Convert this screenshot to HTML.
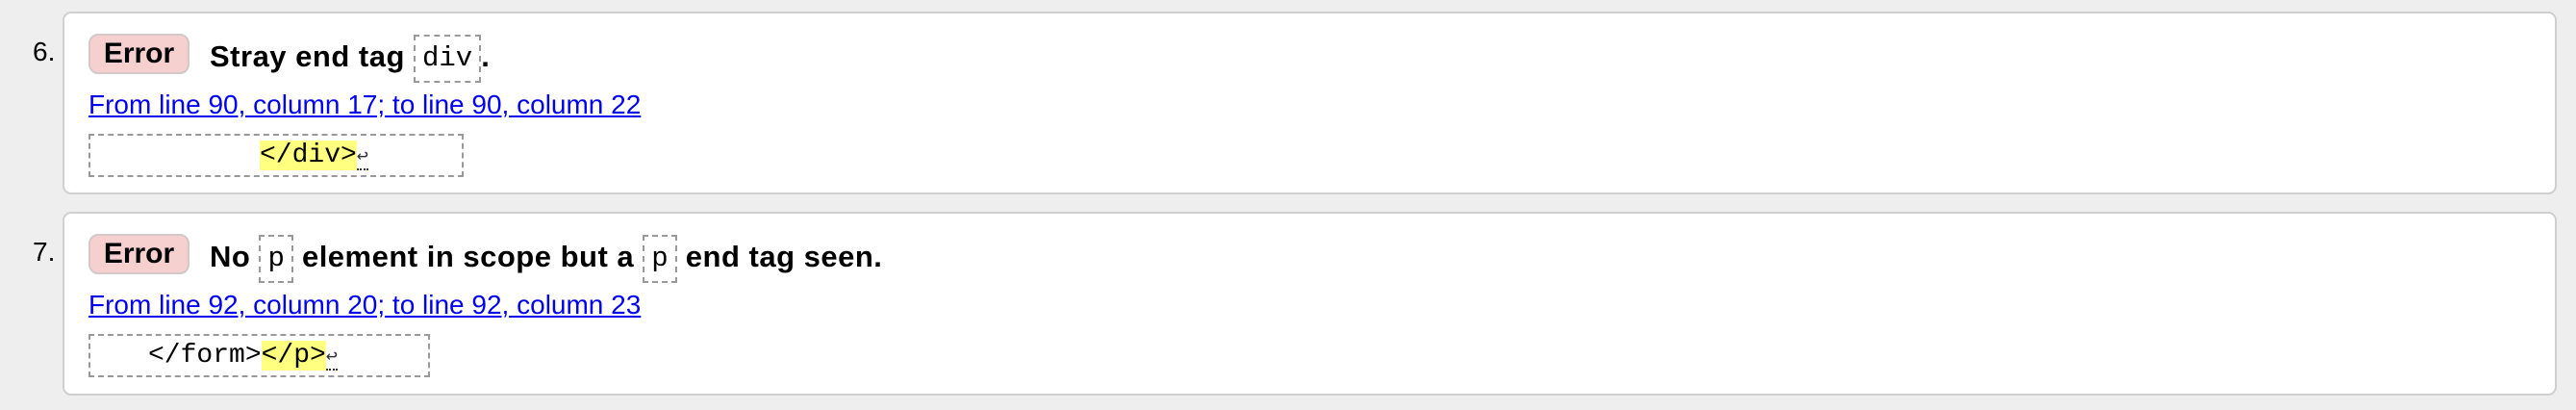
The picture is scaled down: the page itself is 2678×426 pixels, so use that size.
<!DOCTYPE html>
<html><head><meta charset="utf-8"><style>
body{margin:0;width:2678px;height:426px;background:#eeeeee;position:relative;overflow:hidden;font-family:"Liberation Sans",Arial,sans-serif;}
.card{position:absolute;left:65px;width:2593px;background:#fff;border:2px solid #cfcfcf;border-radius:9px;box-sizing:border-box;}
.num{position:absolute;left:34px;font-size:28px;color:#000;}
.badge{position:absolute;left:92px;width:105px;height:42px;background:#f6cfcf;border:2px solid #d4c8c8;border-radius:10px;box-sizing:border-box;font-weight:bold;font-size:30px;line-height:38px;text-align:center;}
.h{position:absolute;left:218px;font-weight:bold;font-size:31px;letter-spacing:0.5px;white-space:nowrap;line-height:40px;}
.ic{display:inline-block;border:2px dashed #999;font-family:"Liberation Mono",monospace;font-weight:normal;font-size:29px;padding:0 7px;line-height:46px;vertical-align:middle;letter-spacing:0;}
a{position:absolute;left:92px;font-size:28px;color:#0000ee;text-decoration:underline;white-space:nowrap;}
.code{position:absolute;left:92px;height:45px;border:2px dashed #999;box-sizing:border-box;font-family:"Liberation Mono",monospace;font-size:28px;white-space:pre;line-height:40px;}
.hl{background:#ffff80;}
.ret{font-size:20px;color:#333;border-bottom:2px dotted #333;}
</style></head><body>
<div class="card" style="top:12px;height:190px"></div>
<div class="num" style="top:38px">6.</div>
<div class="badge" style="top:35px">Error</div>
<div class="h" style="top:36px">Stray end tag <span class="ic">div</span>.</div>
<a style="top:93px">From line 90, column 17; to line 90, column 22</a>
<div class="code" style="top:139px;width:390px"><span style="position:absolute;left:176px;top:1px"><span class="hl">&lt;/div&gt;</span><span class="ret">↩</span></span></div>

<div class="card" style="top:220px;height:191px"></div>
<div class="num" style="top:246px">7.</div>
<div class="badge" style="top:243px">Error</div>
<div class="h" style="top:244px">No <span class="ic">p</span> element in scope but a <span class="ic">p</span> end tag seen.</div>
<a style="top:301px">From line 92, column 20; to line 92, column 23</a>
<div class="code" style="top:347px;width:355px"><span style="position:absolute;left:60px;top:1px">&lt;/form&gt;<span class="hl">&lt;/p&gt;</span><span class="ret">↩</span></span></div>
</body></html>
